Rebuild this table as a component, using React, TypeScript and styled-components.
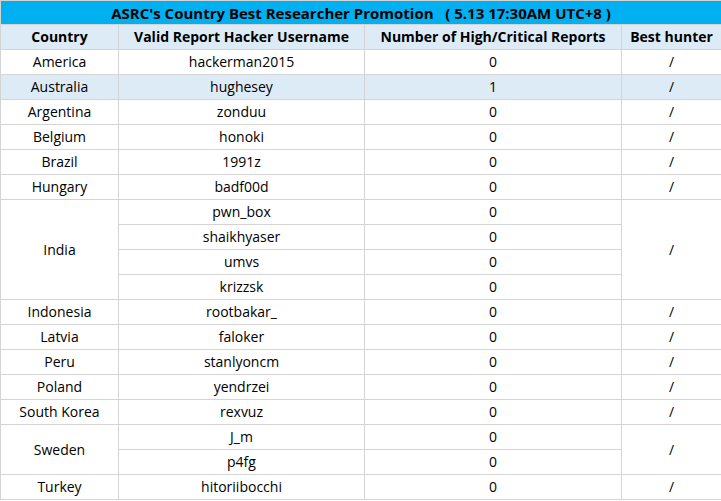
import React from "react";
import styled, { createGlobalStyle } from "styled-components";

type Entry = {
  country: string;
  hunters: string[];
  reports: number[];
  highlight?: boolean;
};

const entries: Entry[] = [
  { country: "America", hunters: ["hackerman2015"], reports: [0] },
  { country: "Australia", hunters: ["hughesey"], reports: [1], highlight: true },
  { country: "Argentina", hunters: ["zonduu"], reports: [0] },
  { country: "Belgium", hunters: ["honoki"], reports: [0] },
  { country: "Brazil", hunters: ["1991z"], reports: [0] },
  { country: "Hungary", hunters: ["badf00d"], reports: [0] },
  {
    country: "India",
    hunters: ["pwn_box", "shaikhyaser", "umvs", "krizzsk"],
    reports: [0, 0, 0, 0],
  },
  { country: "Indonesia", hunters: ["rootbakar_"], reports: [0] },
  { country: "Latvia", hunters: ["faloker"], reports: [0] },
  { country: "Peru", hunters: ["stanlyoncm"], reports: [0] },
  { country: "Poland", hunters: ["yendrzei"], reports: [0] },
  { country: "South Korea", hunters: ["rexvuz"], reports: [0] },
  { country: "Sweden", hunters: ["J_m", "p4fg"], reports: [0, 0] },
  { country: "Turkey", hunters: ["hitoriibocchi"], reports: [0] },
];

const GlobalStyle = createGlobalStyle`
  html, body {
    margin: 0;
    padding: 0;
    background: #ffffff;
  }
  body {
    font-family: "Open Sans", "Noto Sans", "Noto Sans CJK SC", sans-serif;
    color: #000000;
  }
`;

const App = () => {
  return (
    <>
      <GlobalStyle />
      <Table>
        <colgroup>
          <col style={{ width: 118 }} />
          <col style={{ width: 246 }} />
          <col style={{ width: 257 }} />
          <col style={{ width: 100 }} />
        </colgroup>
        <thead>
          <tr>
            <TitleCell colSpan={4}>
              ASRC's Country Best Researcher Promotion&nbsp;&nbsp;&nbsp;( 5.13 17:30AM UTC+8 )
            </TitleCell>
          </tr>
          <tr>
            <HeadCell>Country</HeadCell>
            <HeadCell>Valid Report Hacker Username</HeadCell>
            <HeadCell>Number of High/Critical Reports</HeadCell>
            <HeadCell>Best hunter</HeadCell>
          </tr>
        </thead>
        <tbody>
          {entries.map((entry) =>
            entry.hunters.map((hunter, i) => (
              <tr key={entry.country + hunter}>
                {i === 0 && (
                  <Cell rowSpan={entry.hunters.length} $highlight={entry.highlight}>
                    {entry.country}
                  </Cell>
                )}
                <Cell $highlight={entry.highlight}>{hunter}</Cell>
                <Cell $highlight={entry.highlight}>{entry.reports[i]}</Cell>
                {i === 0 && (
                  <Cell rowSpan={entry.hunters.length} $highlight={entry.highlight}>
                    /
                  </Cell>
                )}
              </tr>
            ))
          )}
        </tbody>
      </Table>
    </>
  );
};

const Table = styled.table`
  border-collapse: collapse;
  table-layout: fixed;
  width: 721px;
  font-size: 14px;
`;

const Cell = styled.td<{ $highlight?: boolean }>`
  height: 24px;
  padding: 0;
  border: 1px solid #d4d4d4;
  text-align: center;
  vertical-align: middle;
  line-height: 20px;
  white-space: nowrap;
  background: ${(p) => (p.$highlight ? "#ddebf7" : "#ffffff")};
`;

const HeadCell = styled.th`
  height: 24px;
  padding: 0;
  border: 1px solid #d4d4d4;
  background: #ddebf7;
  font-weight: 700;
  text-align: center;
  vertical-align: middle;
  line-height: 20px;
  white-space: nowrap;
`;

const TitleCell = styled.th`
  height: 23px;
  padding: 0;
  border: 1px solid #d4d4d4;
  background: #00b0f0;
  font-weight: 700;
  font-size: 15px;
  text-align: center;
  vertical-align: middle;
  line-height: 20px;
  white-space: nowrap;
`;

export default App;
